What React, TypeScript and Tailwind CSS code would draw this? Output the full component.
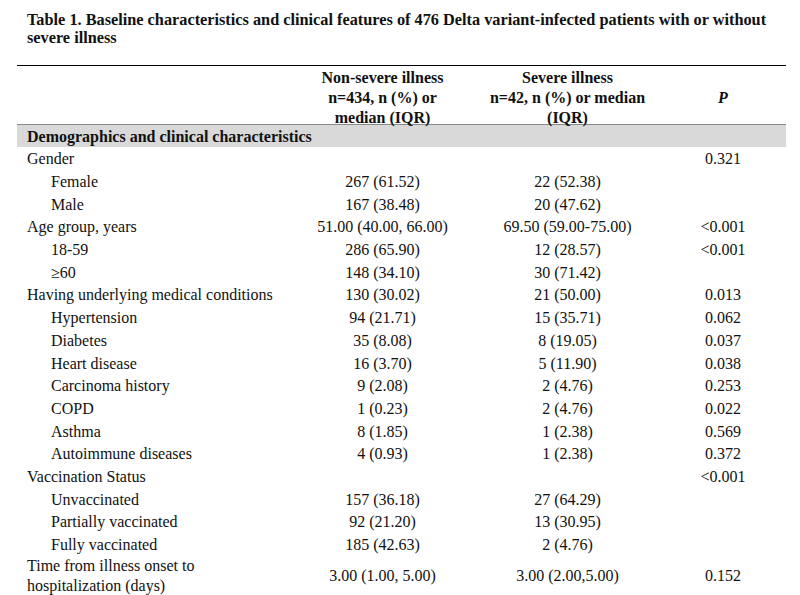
import React from 'react';

type Row = {
  label: string;
  sub?: boolean;
  a?: string;
  b?: string;
  p?: string;
};

const rows: Row[] = [
  { label: 'Gender', p: '0.321' },
  { label: 'Female', sub: true, a: '267 (61.52)', b: '22 (52.38)' },
  { label: 'Male', sub: true, a: '167 (38.48)', b: '20 (47.62)' },
  { label: 'Age group, years', a: '51.00 (40.00, 66.00)', b: '69.50 (59.00-75.00)', p: '<0.001' },
  { label: '18-59', sub: true, a: '286 (65.90)', b: '12 (28.57)', p: '<0.001' },
  { label: '≥60', sub: true, a: '148 (34.10)', b: '30 (71.42)' },
  { label: 'Having underlying medical conditions', a: '130 (30.02)', b: '21 (50.00)', p: '0.013' },
  { label: 'Hypertension', sub: true, a: '94 (21.71)', b: '15 (35.71)', p: '0.062' },
  { label: 'Diabetes', sub: true, a: '35 (8.08)', b: '8 (19.05)', p: '0.037' },
  { label: 'Heart disease', sub: true, a: '16 (3.70)', b: '5 (11.90)', p: '0.038' },
  { label: 'Carcinoma history', sub: true, a: '9 (2.08)', b: '2 (4.76)', p: '0.253' },
  { label: 'COPD', sub: true, a: '1 (0.23)', b: '2 (4.76)', p: '0.022' },
  { label: 'Asthma', sub: true, a: '8 (1.85)', b: '1 (2.38)', p: '0.569' },
  { label: 'Autoimmune diseases', sub: true, a: '4 (0.93)', b: '1 (2.38)', p: '0.372' },
  { label: 'Vaccination Status', p: '<0.001' },
  { label: 'Unvaccinated', sub: true, a: '157 (36.18)', b: '27 (64.29)' },
  { label: 'Partially vaccinated', sub: true, a: '92 (21.20)', b: '13 (30.95)' },
  { label: 'Fully vaccinated', sub: true, a: '185 (42.63)', b: '2 (4.76)' },
];

const cols = 'grid grid-cols-[273px_185px_185px_126px]';

export default function App() {
  return (
    <div className="w-[800px] h-[595px] overflow-hidden bg-white text-[#111] font-['Liberation_Serif',serif]">
      <div className="pl-[27px] pt-[11px] text-[16.3px] leading-[18px] font-bold whitespace-nowrap">
        Table 1. Baseline characteristics and clinical features of 476 Delta variant-infected patients with or without
        <br />
        severe illness
      </div>

      <div className="ml-[17px] mt-[18px] w-[769px]">
        <div className="border-t-[1.5px] border-black" />

        {/* header */}
        <div className={`${cols} h-[58px] pt-[2px] text-[16px] leading-[20px] font-bold`}>
          <div />
          <div className="text-center">
            Non-severe illness
            <br />
            n=434, n (%) or
            <br />
            median (IQR)
          </div>
          <div className="text-center">
            Severe illness
            <br />
            n=42, n (%) or median
            <br />
            (IQR)
          </div>
          <div className="flex items-center justify-center italic">P</div>
        </div>

        <div className="h-[23px] bg-[#d9d9d9] border-t border-[#8a8a8a] pl-[10px] pt-[1px] text-[16px] leading-[21px] font-bold">
          Demographics and clinical characteristics
        </div>

        <div className="pt-[1px] text-[16px]">
          {rows.map((r) => (
            <div key={r.label} className={`${cols} h-[22.7px] items-center leading-[18px]`}>
              <div className={r.sub ? 'pl-[34px]' : 'pl-[10px]'}>{r.label}</div>
              <div className="text-center">{r.a}</div>
              <div className="text-center">{r.b}</div>
              <div className="text-center">{r.p}</div>
            </div>
          ))}
          <div className={`${cols} h-[38px] items-center leading-[19.5px]`}>
            <div className="pl-[10px]">
              Time from illness onset to
              <br />
              hospitalization (days)
            </div>
            <div className="text-center">3.00 (1.00, 5.00)</div>
            <div className="text-center">3.00 (2.00,5.00)</div>
            <div className="text-center">0.152</div>
          </div>
        </div>
      </div>
    </div>
  );
}
